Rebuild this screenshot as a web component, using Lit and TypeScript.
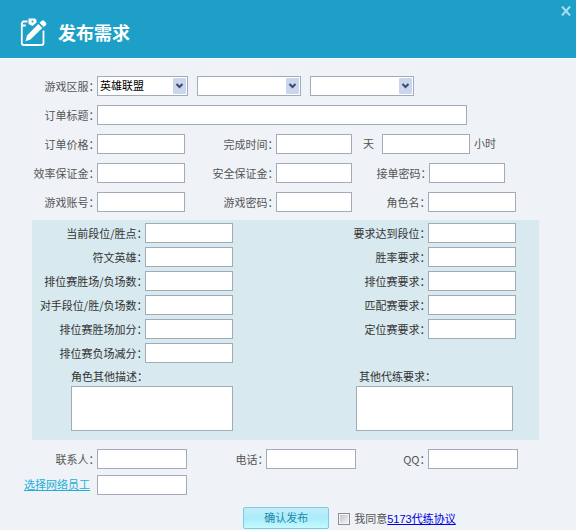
import { LitElement, html, css, nothing } from "lit";
import { customElement } from "lit/decorators.js";

interface Field {
  id: string;
  label: string;
}

const CURRENT: Field[] = [
  { id: "rank-now", label: "当前段位/胜点：" },
  { id: "runes", label: "符文英雄：" },
  { id: "ranked-record", label: "排位赛胜场/负场数：" },
  { id: "rival-record", label: "对手段位/胜/负场数：" },
  { id: "win-points", label: "排位赛胜场加分：" },
  { id: "loss-points", label: "排位赛负场减分：" },
];

const WANTED: Field[] = [
  { id: "rank-goal", label: "要求达到段位：" },
  { id: "win-rate", label: "胜率要求：" },
  { id: "ranked-goal", label: "排位赛要求：" },
  { id: "match-goal", label: "匹配赛要求：" },
  { id: "placement-goal", label: "定位赛要求：" },
];

@customElement("app-root")
export class AppRoot extends LitElement {
  static styles = css`
    :host {
      display: block;
      min-height: 100vh;
      background: #eff3f8;
      color: #555;
      font: 11px/16px "Liberation Sans", "Noto Sans CJK SC", sans-serif;
    }
    * {
      box-sizing: border-box;
    }
    header {
      display: flex;
      align-items: center;
      gap: 10px;
      height: 59px;
      padding: 6px 4px 0 20px;
      background: #1e9fc8;
      border-bottom: 1px solid #fff;
    }
    .logo {
      width: 28px;
      height: 30px;
    }
    h1 {
      flex: 1;
      margin: 0;
      color: #fff;
      font: bold 18px/24px "Noto Sans CJK SC", sans-serif;
    }
    .close {
      align-self: flex-start;
      width: 12px;
      height: 10px;
      padding: 0;
      border: 0;
      background: none;
      color: #a9dcf0;
    }
    .close svg {
      display: block;
      margin: auto;
    }
    form {
      display: flex;
      flex-direction: column;
      padding-top: 17px;
    }
    .rows {
      display: grid;
      gap: 9px;
    }
    .row {
      display: grid;
      grid-template-columns: 185fr 167fr 164fr 60fr;
    }
    .contact .row {
      grid-template-columns: 187fr 169fr 162fr 58fr;
    }
    .line {
      display: flex;
      align-items: center;
      gap: 9px;
      padding-right: 109px;
    }
    .line .caption {
      width: 97px;
      margin-right: -9px;
    }
    .cell {
      display: flex;
      align-items: center;
      justify-content: flex-end;
    }
    .bonds .cell:last-child {
      padding-right: 11px;
    }
    .hours {
      grid-column: span 2;
      justify-content: flex-start;
      gap: 4px;
      padding-left: 11px;
    }
    .days {
      margin-right: 4px;
    }
    .caption {
      padding-right: 3px;
      text-align: right;
      white-space: nowrap;
      font-family: "Noto Sans CJK SC", sans-serif;
      font-feature-settings: "halt";
    }
    input[type="text"],
    input[type="password"],
    textarea,
    select {
      display: block;
      height: 20px;
      margin: 0;
      padding: 0 2px;
      border: 1px solid #a3abb8;
      border-radius: 0;
      background: #fff;
      color: #000;
      font: inherit;
      outline-offset: -1px;
    }
    .wide {
      width: 88px;
    }
    .mid {
      width: 76px;
    }
    .contact .wide {
      width: 90px;
    }
    .title {
      flex: 1;
      min-width: 0;
    }
    .picker {
      display: grid;
      align-items: center;
      justify-items: end;
      width: 104px;
    }
    .picker.first {
      width: 91px;
    }
    .picker > * {
      grid-area: 1 / 1;
    }
    .picker select {
      width: 100%;
      appearance: none;
    }
    .picker svg {
      margin-right: 2px;
      pointer-events: none;
    }
    .panel {
      display: grid;
      grid-template-columns: 201fr 283fr 23fr;
      margin: 8px 37px 0 32px;
      padding: 3px 0 9px;
      background: #d8e9ef;
      color: #333;
    }
    .column {
      display: grid;
      grid-auto-rows: 20px;
      row-gap: 4px;
    }
    .note {
      display: flex;
      flex-direction: column;
      align-items: flex-end;
      padding-top: 5px;
    }
    .note .caption {
      width: 162px;
      height: 18px;
      text-align: left;
    }
    .note textarea {
      width: 162px;
      height: 45px;
      resize: none;
    }
    .note.goal {
      padding-right: 3px;
    }
    .goal textarea,
    .goal .caption {
      width: 157px;
    }
    .goal .caption {
      padding-left: 3px;
    }
    .contact {
      margin-top: 9px;
      gap: 6px;
    }
    .staff {
      margin-right: 7px;
      color: #22aed6;
      white-space: nowrap;
    }
    .submit {
      display: flex;
      align-items: center;
      justify-content: center;
      padding: 12px 0 0 123px;
    }
    .send {
      width: 86px;
      height: 22px;
      margin-right: 9px;
      padding: 0;
      border: 1px solid #7ccbe3;
      border-radius: 2px;
      background: linear-gradient(#c4ecf9, #a9ecfb 50%, #c4faff);
      color: #1c86ad;
      font: inherit;
    }
    .tick {
      appearance: none;
      width: 12px;
      height: 12px;
      margin: 2px 4px 0 0;
      border: 1px solid #8b8f94;
      background: linear-gradient(135deg, #c0c3c8, #f4f5f6);
      box-shadow: inset 0 0 0 1px #f4f4f4;
    }
    .tick:checked {
      background: #1c86ad;
    }
    .agree {
      margin-top: 2px;
      white-space: nowrap;
    }
    .agree a {
      color: #0000e0;
    }
  `;

  private field(f: Field, size = "wide", type = "text") {
    return html`<div class="cell">
      <label class="caption" for=${f.id}>${f.label}</label>
      <input class=${size} id=${f.id} type=${type} />
    </div>`;
  }

  private picker(id: string, name: string, value = "") {
    return html`<div class="picker ${value ? "first" : ""}">
      <select id=${id} aria-label=${name}>
        <option>${value || nothing}</option>
      </select>
      <svg width="13" height="16" viewBox="0 0 13 16" aria-hidden="true">
        <rect width="13" height="16" rx="1" fill="#c9d6ee" />
        <path d="M3.5 6l3 3 3-3" fill="none" stroke="#3f4a68" stroke-width="2" />
      </svg>
    </div>`;
  }

  render() {
    return html`
      <header>
        <svg class="logo" viewBox="0 0 28 30" aria-hidden="true">
          <path
            d="M7.500 4.500H3L1.800 6.500V26a2 2 0 0 0 2 2H21.500a2 2 0 0 0 2-2V13.500M1.800 8.500h4"
            fill="none" stroke="#fff" stroke-width="1.800" stroke-linejoin="round" />
          <path d="M8.500 1.500h6.500l1.500 1.500v2.500l-4 3.500-4-2z" fill="#fff" />
          <circle cx="12.500" cy="4.500" r="1" fill="#1e9fc8" />
          <path d="M18.300 7l4 4L10.500 22.500l-5 1.800L7 18.500z" fill="#fff" />
          <path d="M19.500 5.800L21.500 4a2 2 0 0 1 2.800 0l1.500 1.500a2 2 0 0 1 0 2.800L23.600 10z" fill="#fff" />
        </svg>
        <h1>发布需求</h1>
        <button class="close" type="button" aria-label="关闭">
          <svg width="10" height="10" viewBox="0 0 10 10">
            <path d="M1 .5l8 9M9 .5l-8 9" stroke="currentColor" stroke-width="2" />
          </svg>
        </button>
      </header>
      <form @submit=${(e: Event) => e.preventDefault()}>
        <div class="rows">
          <div class="line">
            <label class="caption" for="game">游戏区服：</label>
            ${this.picker("game", "游戏", "英雄联盟")}
            ${this.picker("zone", "区")} ${this.picker("server", "服")}
          </div>
          <div class="line">
            <label class="caption" for="title">订单标题：</label>
            <input class="title" id="title" type="text" />
          </div>
          <div class="row">
            ${this.field({ id: "price", label: "订单价格：" })}
            ${this.field({ id: "days", label: "完成时间：" }, "mid")}
            <div class="cell hours">
              <label class="days" for="days">天</label>
              <input class="wide" id="hours" type="text" />
              <label for="hours">小时</label>
            </div>
          </div>
          <div class="row bonds">
            ${this.field({ id: "speed-bond", label: "效率保证金：" })}
            ${this.field({ id: "safe-bond", label: "安全保证金：" }, "mid")}
            ${this.field({ id: "order-pass", label: "接单密码：" }, "mid", "password")}
          </div>
          <div class="row">
            ${this.field({ id: "account", label: "游戏账号：" })}
            ${this.field({ id: "game-pass", label: "游戏密码：" }, "mid", "password")}
            ${this.field({ id: "role", label: "角色名：" })}
          </div>
        </div>
        <div class="panel">
          <div class="column">${CURRENT.map((f) => this.field(f))}</div>
          <div class="column">${WANTED.map((f) => this.field(f))}</div>
          <span></span>
          <div class="note">
            <label class="caption" for="about">角色其他描述：</label>
            <textarea id="about"></textarea>
          </div>
          <div class="note goal">
            <label class="caption" for="other">其他代练要求：</label>
            <textarea id="other"></textarea>
          </div>
        </div>
        <div class="rows contact">
          <div class="row">
            ${this.field({ id: "contact", label: "联系人：" })}
            ${this.field({ id: "phone", label: "电话：" })}
            ${this.field({ id: "qq", label: "QQ：" })}
          </div>
          <div class="row">
            <div class="cell">
              <a class="staff" href="#staff">选择网络员工</a>
              <input class="wide" id="staff" type="text" aria-label="网络员工" />
            </div>
          </div>
        </div>
        <div class="submit">
          <button class="send" type="submit">确认发布</button>
          <input class="tick" id="agree" type="checkbox" />
          <span class="agree"><label for="agree">我同意</label><a href="#terms">5173代练协议</a></span>
        </div>
      </form>
    `;
  }
}
